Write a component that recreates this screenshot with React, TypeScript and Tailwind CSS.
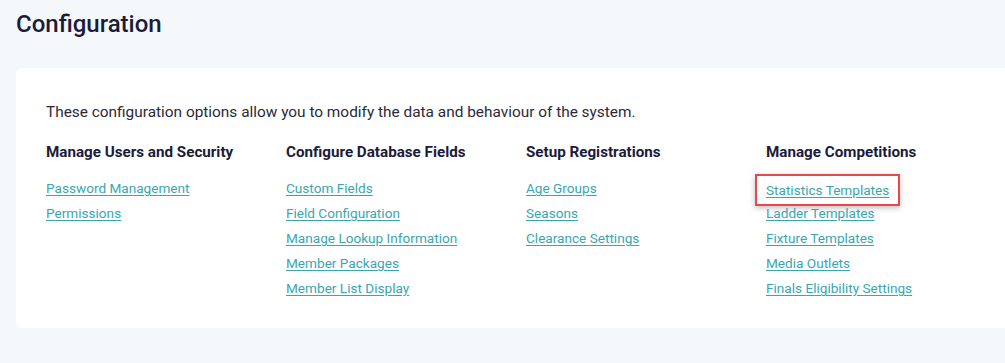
const columns = [
  { title: "Manage Users and Security", links: ["Password Management", "Permissions"] },
  {
    title: "Configure Database Fields",
    links: ["Custom Fields", "Field Configuration", "Manage Lookup Information", "Member Packages", "Member List Display"],
  },
  { title: "Setup Registrations", links: ["Age Groups", "Seasons", "Clearance Settings"] },
  {
    title: "Manage Competitions",
    links: ["Statistics Templates", "Ladder Templates", "Fixture Templates", "Media Outlets", "Finals Eligibility Settings"],
  },
];

export default function App() {
  return (
    <div className="w-[1005px] h-[363px] overflow-hidden bg-[#f5f8fb] font-['Roboto',sans-serif]">
      <h1 className="pl-4 pt-[9px] text-[24px] leading-[30px] font-medium text-[#1b1b3a]">Configuration</h1>
      <div className="ml-4 mt-[29px] h-[260px] rounded-l-[7px] bg-white pl-[30px] pt-[34px]">
        <p className="text-[15.4px] leading-[20px] text-[#2a2a3a]">
          These configuration options allow you to modify the data and behaviour of the system.
        </p>
        <div className="mt-[20px] grid grid-cols-[240px_240px_240px_240px]">
          {columns.map((col) => (
            <div key={col.title}>
              <h3 className="text-[15.2px] leading-[20px] font-bold text-[#1b1b3a]">{col.title}</h3>
              <ul className="mt-[14px] flex flex-col">
                {col.links.map((link) => (
                  <li key={link} className="h-[25px]">
                    {link === "Statistics Templates" ? (
                      <span className="inline-block -ml-[11px] -mt-[2px] border-2 border-[#e5484d] px-[9px] py-[2px] shadow-[0_2px_6px_rgba(0,0,0,0.25)]">
                        <a href="#" className="text-[13.6px] leading-[20px] text-[#3aa6b0] underline underline-offset-2">
                          {link}
                        </a>
                      </span>
                    ) : (
                      <a href="#" className="text-[13.6px] leading-[20px] text-[#3aa6b0] underline underline-offset-2">
                        {link}
                      </a>
                    )}
                  </li>
                ))}
              </ul>
            </div>
          ))}
        </div>
      </div>
    </div>
  );
}
